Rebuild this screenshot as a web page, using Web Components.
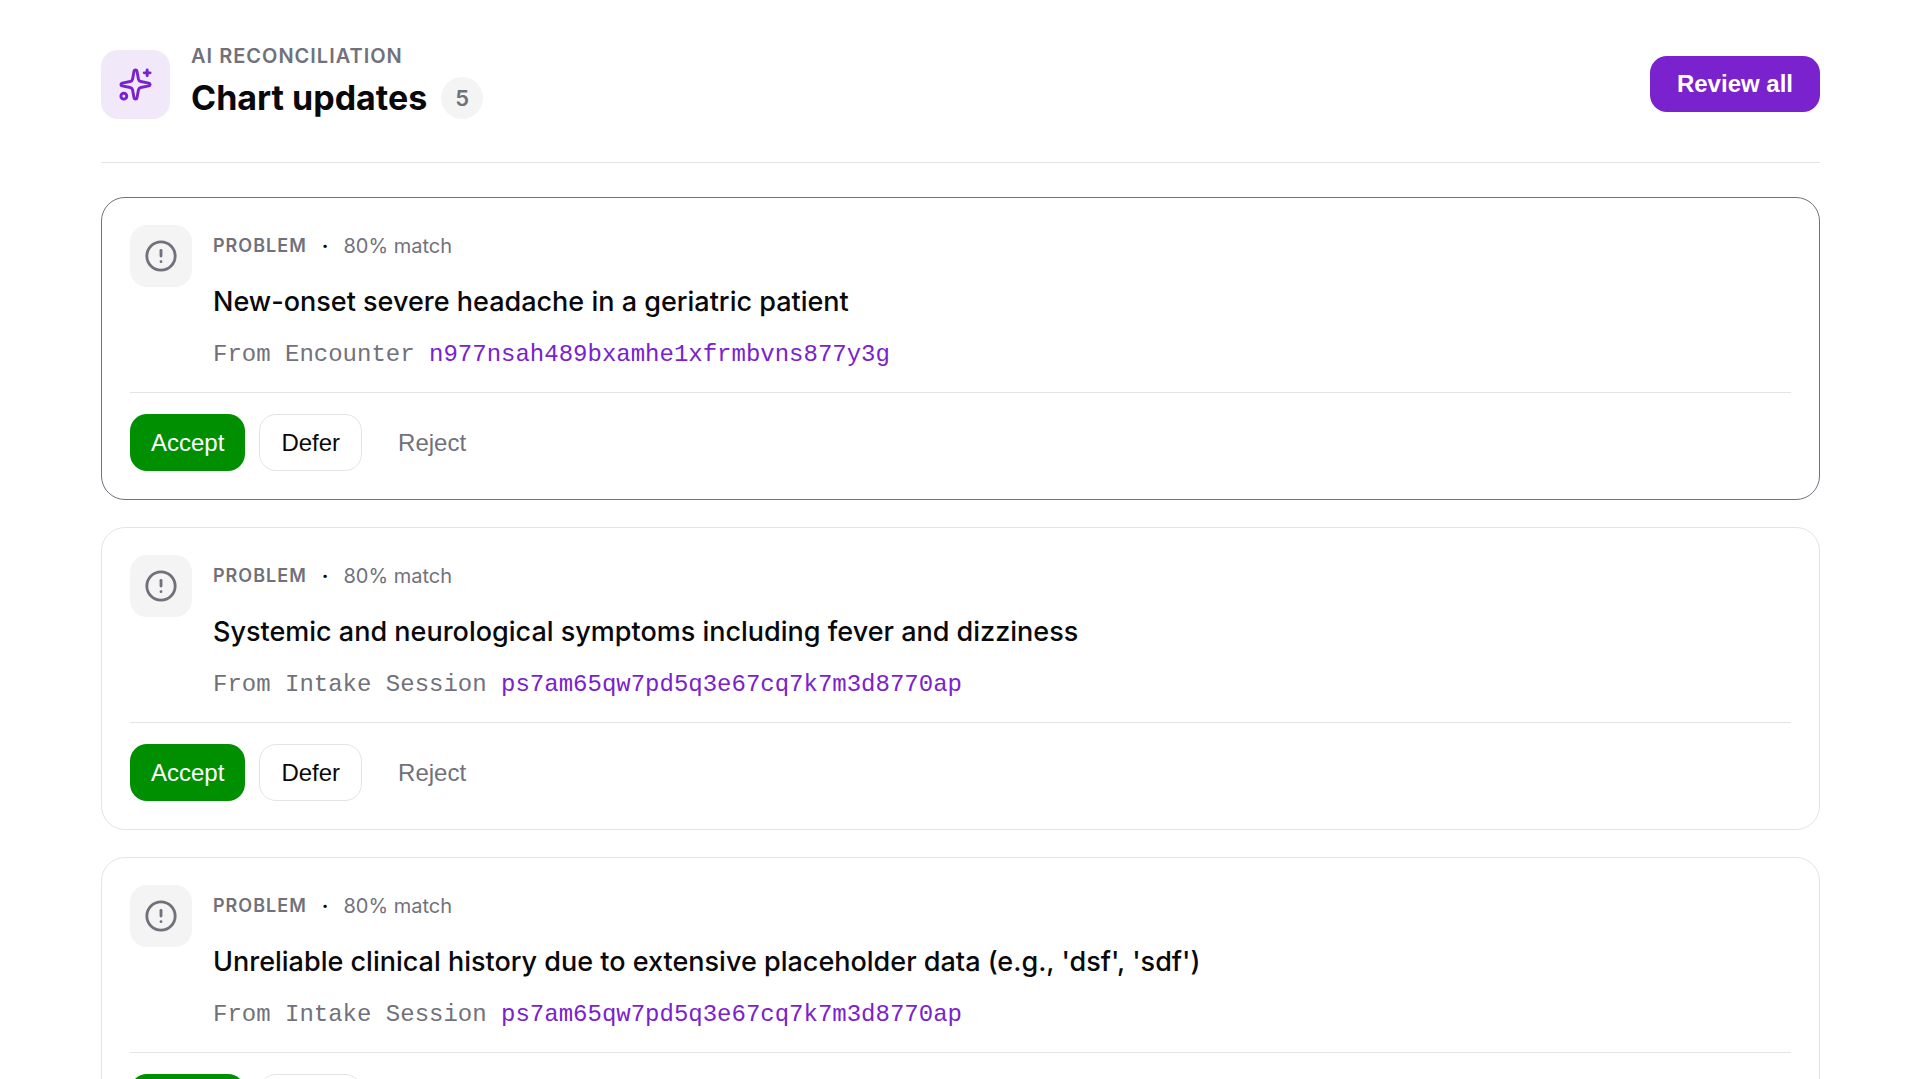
<!DOCTYPE html>
<html lang="en">
<head>
    <meta charset="UTF-8">
    <meta name="viewport" content="width=device-width, initial-scale=1.0">
    <title>Chart updates</title>
    <style>
        :root {
            --fg: #09090b;
            --muted: #71717b;
            --line: #e4e4e7;
            --surface: #f4f4f5;
            --primary: #7a22ce;
            --primary-soft: #f1e8fa;
            --success: #008f00;
            --radius: 17px;
            --font-ui: "Liberation Sans", Arial, sans-serif;
            --font-mono: "Liberation Mono", monospace;
        }

        body {
            margin: 0;
            background-color: #fff;
            color: var(--fg);
            font-family: Inter, sans-serif;
        }
    </style>
</head>
<body>
    <review-page>
        <review-header slot="header" label="AI Reconciliation" title="Chart updates" count="5"></review-header>
        <update-card active type="Problem" match="80% match" source="From Encounter" ref="n977nsah489bxamhe1xfrmbvns877y3g">New-onset severe headache in a geriatric patient</update-card>
        <update-card type="Problem" match="80% match" source="From Intake Session" ref="ps7am65qw7pd5q3e67cq7k7m3d8770ap">Systemic and neurological symptoms including fever and dizziness</update-card>
        <update-card type="Problem" match="80% match" source="From Intake Session" ref="ps7am65qw7pd5q3e67cq7k7m3d8770ap">Unreliable clinical history due to extensive placeholder data (e.g., 'dsf', 'sdf')</update-card>
    </review-page>

    <script>
        // ------- icons -------
        const ICONS = {
            sparkles: `
                <path d="M11.017 2.814a1 1 0 0 1 1.966 0l1.051 5.558a2 2 0 0 0 1.594 1.594l5.558 1.051a1 1 0 0 1 0 1.966l-5.558 1.051a2 2 0 0 0-1.594 1.594l-1.051 5.558a1 1 0 0 1-1.966 0l-1.051-5.558a2 2 0 0 0-1.594-1.594l-5.558-1.051a1 1 0 0 1 0-1.966l5.558-1.051a2 2 0 0 0 1.594-1.594z"/>
                <path d="M20 2v4"/>
                <path d="M22 4h-4"/>
                <circle cx="4" cy="20" r="2"/>
            `,
            alert: `
                <circle cx="12" cy="12" r="10"/>
                <line x1="12" x2="12" y1="8" y2="12"/>
                <line x1="12" x2="12.01" y1="16" y2="16"/>
            `
        };

        class IconTile extends HTMLElement {
            constructor() {
                super();

                const shadowRoot = this.attachShadow({ mode: "open" });

                shadowRoot.innerHTML = `
                    <style>
                        :host {
                            display: flex;
                            flex: none;
                            align-items: center;
                            justify-content: center;
                            width: 62px;
                            height: 62px;
                            border-radius: var(--radius);
                            background-color: var(--surface);
                            color: var(--muted);
                        }
                        :host([large]) {
                            width: 69px;
                            height: 69px;
                            background-color: var(--primary-soft);
                            color: var(--primary);
                        }
                        svg {
                            width: 34px;
                            height: 34px;
                            fill: none;
                            stroke: currentColor;
                            stroke-width: 2;
                            stroke-linecap: round;
                            stroke-linejoin: round;
                        }
                        :host([large]) svg {
                            width: 35px;
                            height: 35px;
                        }
                    </style>
                    <svg viewBox="0 0 24 24" aria-hidden="true"></svg>
                `;
            }

            connectedCallback() {
                this.shadowRoot.querySelector("svg").innerHTML = ICONS[this.getAttribute("name")] || "";
            }
        }

        // ------- button: primary / accept / outline / ghost -------
        class UiButton extends HTMLElement {
            constructor() {
                super();

                const shadowRoot = this.attachShadow({ mode: "open" });

                shadowRoot.innerHTML = `
                    <style>
                        :host {
                            display: block;
                            flex: none;
                        }
                        button {
                            display: block;
                            margin: 0;
                            padding: 14px 21px;
                            border: 1px solid transparent;
                            border-radius: var(--radius);
                            background: none;
                            color: var(--fg);
                            font: 400 24px/27px var(--font-ui);
                            cursor: pointer;
                        }
                        :host([variant="primary"]) button {
                            padding: 14px 27px;
                            border: 0;
                            background-color: var(--primary);
                            color: #fff;
                            font-weight: 700;
                            line-height: 28px;
                        }
                        :host([variant="accept"]) button {
                            padding: 15px 21px;
                            border: 0;
                            background-color: var(--success);
                            color: #fff;
                        }
                        :host([variant="outline"]) button {
                            border-color: var(--line);
                            background-color: #fff;
                        }
                        :host([variant="ghost"]) button {
                            color: var(--muted);
                        }
                    </style>
                    <button type="button"><slot></slot></button>
                `;
            }
        }

        class ReviewHeader extends HTMLElement {
            constructor() {
                super();

                const shadowRoot = this.attachShadow({ mode: "open" });

                shadowRoot.innerHTML = `
                    <style>
                        :host {
                            display: flex;
                            align-items: center;
                            gap: 21px;
                            padding-bottom: 36px;
                            border-bottom: 1px solid var(--line);
                        }
                        .text {
                            flex: 1;
                        }
                        .label {
                            margin: 0;
                            color: var(--muted);
                            font-size: 20px;
                            font-weight: 600;
                            line-height: 28px;
                            letter-spacing: 1px;
                            text-transform: uppercase;
                        }
                        .heading {
                            display: flex;
                            align-items: center;
                            gap: 14px;
                        }
                        h1 {
                            margin: 0;
                            font-size: 34px;
                            font-weight: 700;
                            line-height: 56px;
                        }
                        .count {
                            min-width: 42px;
                            border-radius: 21px;
                            background-color: var(--surface);
                            color: var(--muted);
                            font-size: 22px;
                            font-weight: 600;
                            line-height: 42px;
                            text-align: center;
                        }
                    </style>
                    <icon-tile large name="sparkles"></icon-tile>
                    <div class="text">
                        <p class="label"></p>
                        <div class="heading">
                            <h1></h1>
                            <span class="count"></span>
                        </div>
                    </div>
                    <ui-button variant="primary">Review all</ui-button>
                `;
            }

            connectedCallback() {
                this.shadowRoot.querySelector(".label").textContent = this.getAttribute("label");
                this.shadowRoot.querySelector("h1").textContent = this.getAttribute("title");
                this.shadowRoot.querySelector(".count").textContent = this.getAttribute("count");
            }
        }

        class UpdateCard extends HTMLElement {
            constructor() {
                super();

                const shadowRoot = this.attachShadow({ mode: "open" });

                shadowRoot.innerHTML = `
                    <style>
                        :host {
                            display: block;
                            padding: 27px 28px 28px;
                            border: 1px solid var(--line);
                            border-radius: 24px;
                            background-color: #fff;
                        }
                        :host([active]) {
                            border-color: var(--muted);
                        }
                        .main {
                            display: flex;
                            align-items: flex-start;
                            gap: 21px;
                            padding-bottom: 19px;
                            border-bottom: 1px solid var(--line);
                        }
                        .body {
                            display: grid;
                            gap: 14px;
                        }
                        .meta {
                            display: flex;
                            gap: 15px;
                            line-height: 42px;
                        }
                        .type {
                            color: var(--muted);
                            font-size: 18px;
                            font-weight: 600;
                            letter-spacing: 1px;
                            text-transform: uppercase;
                        }
                        .dot {
                            font-size: 20px;
                            font-weight: 700;
                        }
                        .match {
                            color: var(--muted);
                            font-size: 20px;
                        }
                        h2 {
                            margin: 0;
                            font-size: 27px;
                            font-weight: 450;
                            line-height: 42px;
                        }
                        .source {
                            margin: 0;
                            color: var(--muted);
                            font-family: var(--font-mono);
                            font-size: 24px;
                            line-height: 36px;
                        }
                        a {
                            color: var(--primary);
                            text-decoration: none;
                        }
                        .actions {
                            display: flex;
                            gap: 14px;
                            padding-top: 21px;
                        }
                    </style>
                    <div class="main">
                        <icon-tile name="alert"></icon-tile>
                        <div class="body">
                            <div class="meta">
                                <span class="type"></span>
                                <span class="dot">·</span>
                                <span class="match"></span>
                            </div>
                            <h2><slot></slot></h2>
                            <p class="source"><span></span> <a></a></p>
                        </div>
                    </div>
                    <div class="actions">
                        <ui-button variant="accept">Accept</ui-button>
                        <ui-button variant="outline">Defer</ui-button>
                        <ui-button variant="ghost">Reject</ui-button>
                    </div>
                `;
            }

            connectedCallback() {
                const link = this.shadowRoot.querySelector("a");

                this.shadowRoot.querySelector(".type").textContent = this.getAttribute("type");
                this.shadowRoot.querySelector(".match").textContent = this.getAttribute("match");
                this.shadowRoot.querySelector(".source span").textContent = this.getAttribute("source");
                link.textContent = this.getAttribute("ref");
                link.href = "#" + this.getAttribute("ref");
            }
        }

        class ReviewPage extends HTMLElement {
            constructor() {
                super();

                const shadowRoot = this.attachShadow({ mode: "open" });

                shadowRoot.innerHTML = `
                    <style>
                        :host {
                            display: block;
                            padding: 42px 99px 42px 101px;
                        }
                        .list {
                            display: grid;
                            gap: 27px;
                            padding-top: 34px;
                        }
                    </style>
                    <slot name="header"></slot>
                    <main class="list"><slot></slot></main>
                `;
            }
        }

        window.customElements.define("icon-tile", IconTile);
        window.customElements.define("ui-button", UiButton);
        window.customElements.define("review-header", ReviewHeader);
        window.customElements.define("update-card", UpdateCard);
        window.customElements.define("review-page", ReviewPage);
    </script>
</body>
</html>
